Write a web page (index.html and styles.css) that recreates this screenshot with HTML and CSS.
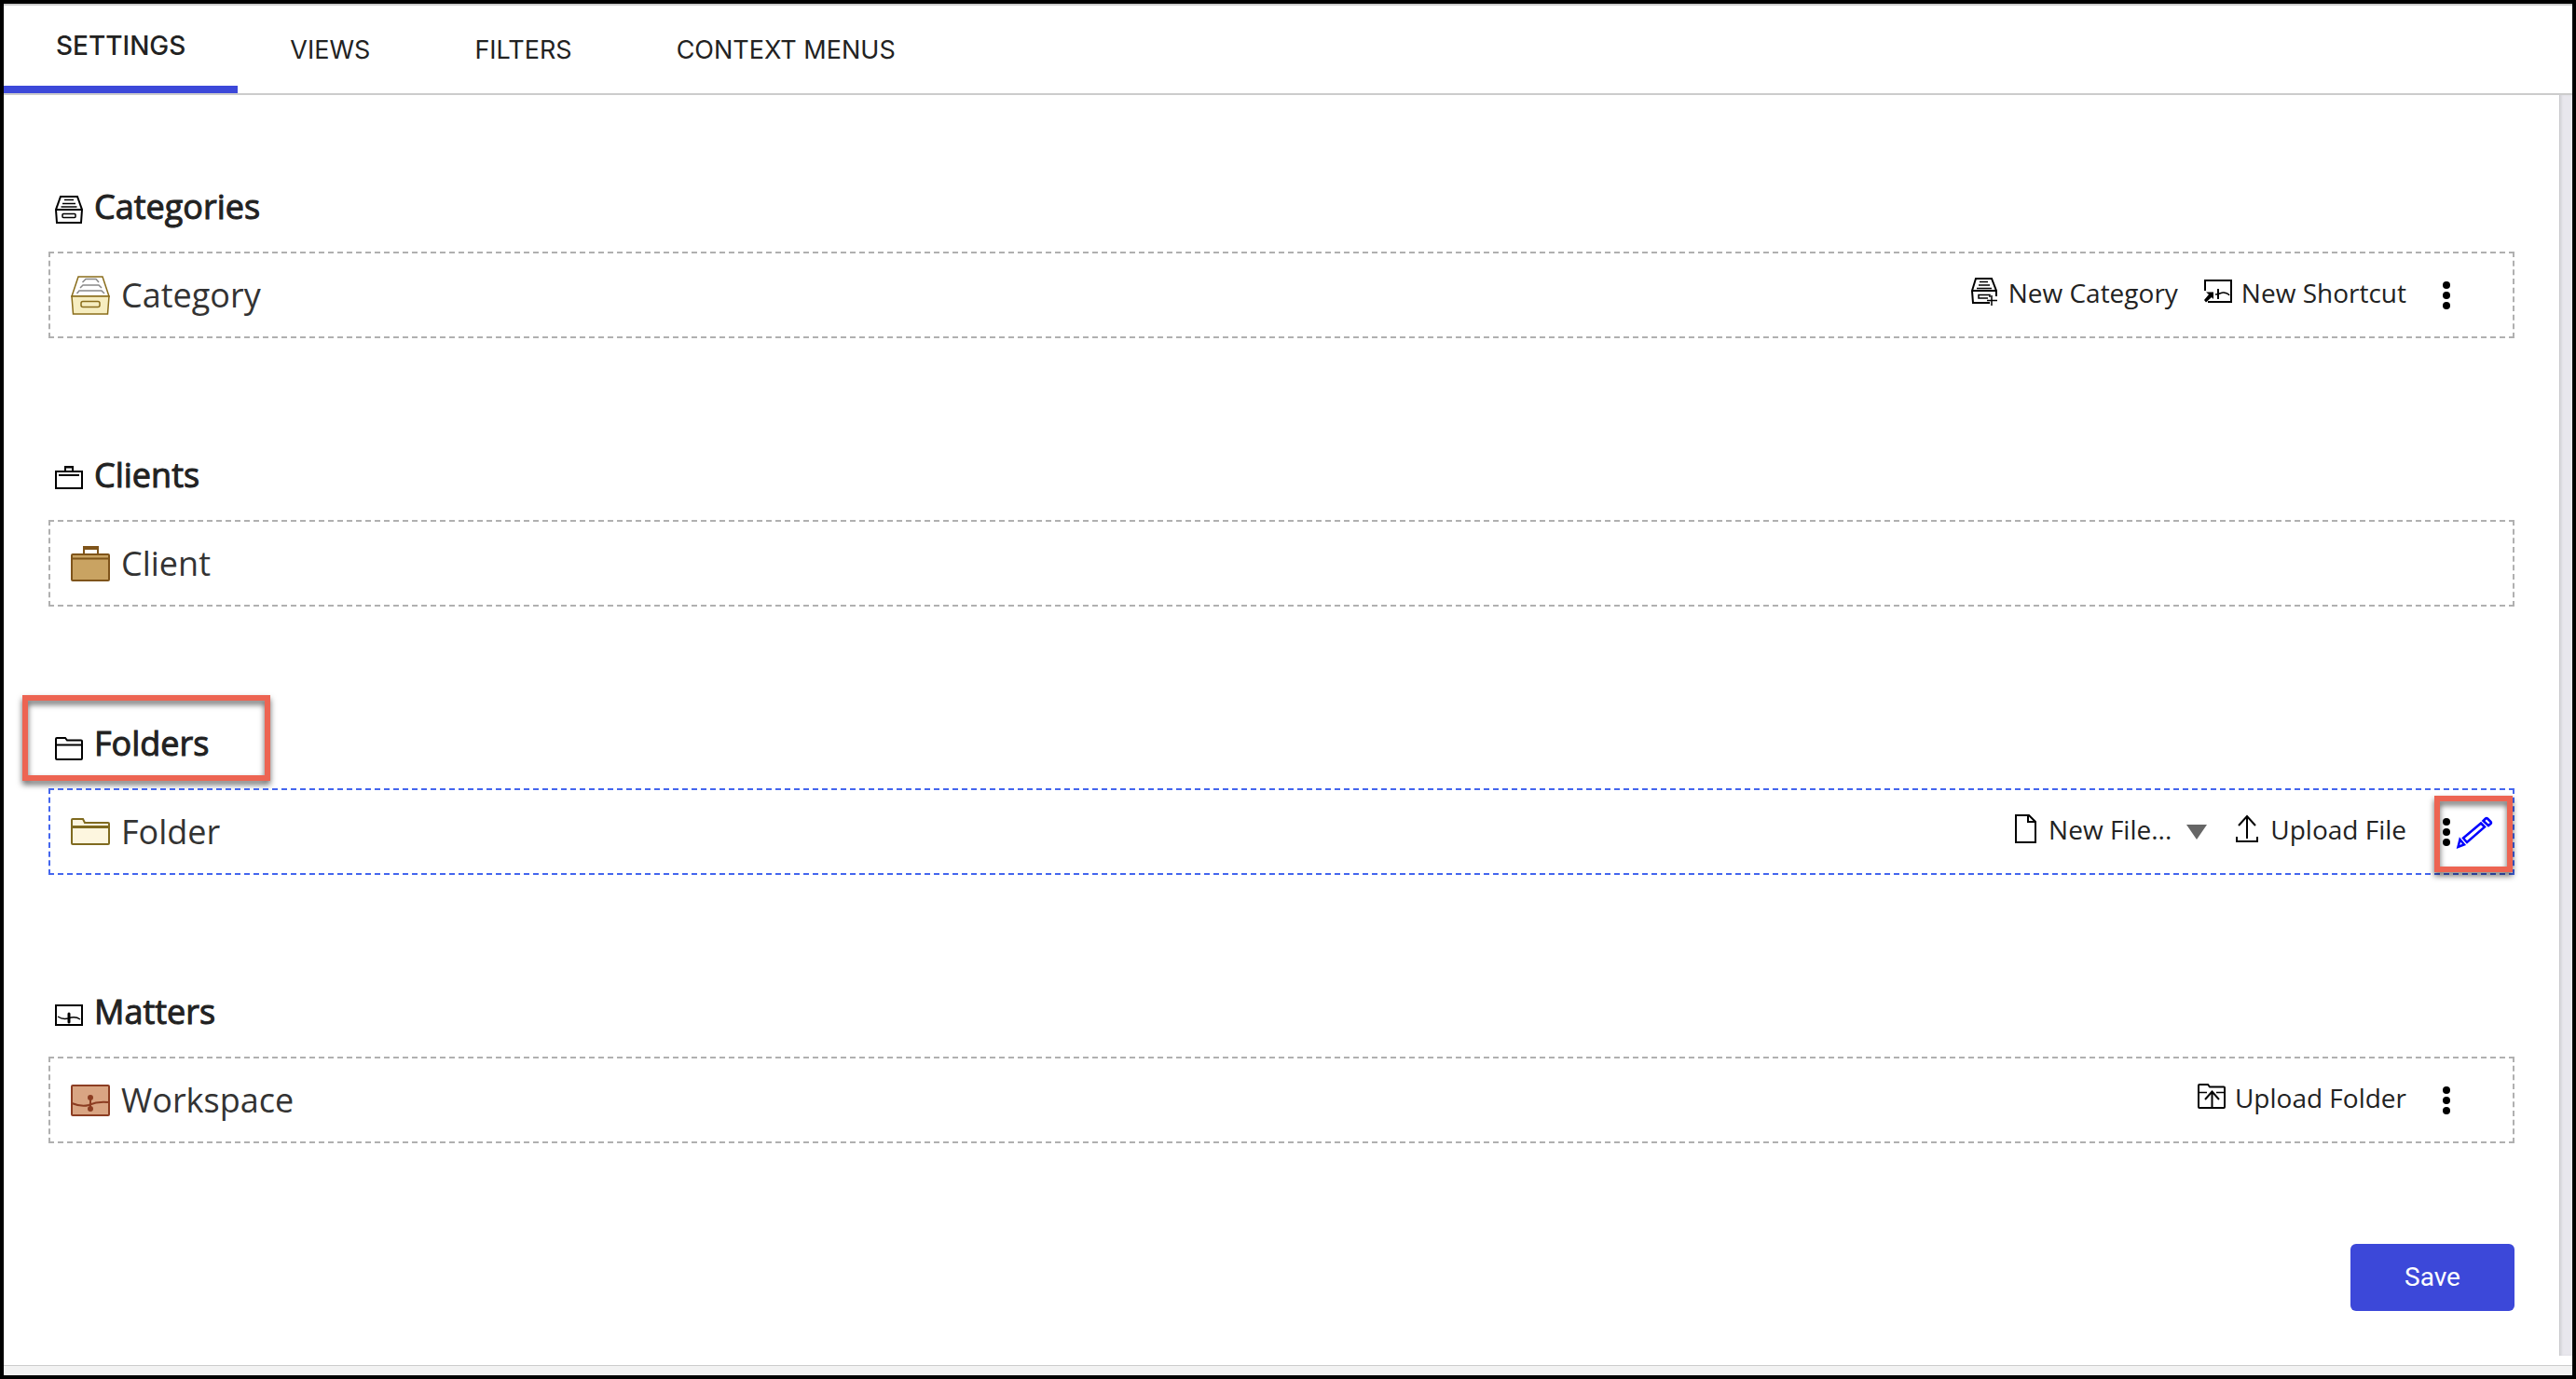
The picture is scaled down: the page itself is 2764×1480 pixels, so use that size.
FILE: index.html
```html
<!DOCTYPE html>
<html lang="en">
<head>
    <meta charset="UTF-8">
    <meta name="viewport" content="width=device-width, initial-scale=1.0">
    <title>Settings</title>
    <link rel="stylesheet" href="styles.css">
</head>
<body>
    <nav class="tabs">
        <a class="tab active" href="#settings">SETTINGS</a>
        <a class="tab" href="#views">VIEWS</a>
        <a class="tab" href="#filters">FILTERS</a>
        <a class="tab" href="#menus">CONTEXT MENUS</a>
    </nav>

    <div class="panel">
        <main class="content">
            <!-- Categories -->
            <section class="group">
                <h2 class="group-title">
                    <svg class="title-icon" viewBox="0 0 30 30">
                        <path d="M6 1H24L29 15L28 29H2L1 15ZM1 15H29"/>
                        <path class="thin" d="M10 4.5H20M8 8.5H22M6.500 12H23.500"/>
                        <rect class="thin" x="8" y="19.500" width="14" height="4" rx="1"/>
                    </svg>
                    Categories
                </h2>
                <div class="card">
                    <svg class="card-icon category" viewBox="0 0 42 42">
                        <path class="paper" d="M8 1H34L41 22H1Z"/>
                        <path class="front" d="M1 22H41L39.500 41H2.500Z"/>
                        <path class="sheets" d="M12.500 7L16 3.500H27L30 7M10 13L13 10H30L33 13M6.500 19L9 16H33L36 19"/>
                        <rect class="front" x="11" y="27.500" width="20" height="6" rx="2"/>
                    </svg>
                    <span class="card-name">Category</span>
                    <div class="actions">
                        <button class="action">
                            <svg class="action-icon" viewBox="0 0 30 30">
                                <path d="M20 27H2L1 14L5 1H22L27 14V20M1 14H27"/>
                                <path class="thin" d="M9 4.500H18M8 8H20M6 11.500H22M20 21V18.500H8V22H18M22 19V30M17 24.500H28"/>
                            </svg>
                            New Category
                        </button>
                        <button class="action">
                            <svg class="action-icon" viewBox="0 0 30 30">
                                <path d="M1 14V3H29V26H4"/>
                                <path class="thin" d="M12 18C17 18 18 15.500 21 16C24 16.500 26 17 27 19"/>
                                <path d="M15 12V23"/>
                                <path class="solid" d="M2 15.500H10V23L8 21L2 26.500L0 24L5 18Z"/>
                            </svg>
                            New Shortcut
                        </button>
                        <button class="more" aria-label="More">
                            <svg viewBox="0 0 22 34"><circle cx="11" cy="6" r="4"/><circle cx="11" cy="17" r="4"/><circle cx="11" cy="28" r="4"/></svg>
                        </button>
                        <div class="edit-slot"></div>
                    </div>
                </div>
            </section>

            <!-- Clients -->
            <section class="group">
                <h2 class="group-title">
                    <svg class="title-icon" viewBox="0 0 30 30">
                        <path d="M1 8H29V26H1ZM11 8V3H19V8"/>
                        <path d="M10 3.500H20M4 12H26"/>
                    </svg>
                    Clients
                </h2>
                <div class="card">
                    <svg class="card-icon client" viewBox="0 0 42 42">
                        <path class="handle" d="M14 11V4Q14 3 15 3H28Q29 3 29 4V11"/>
                        <path class="handle-top" d="M13 4H30"/>
                        <rect x="1" y="11" width="40" height="28" rx="1"/>
                        <path d="M1 15.500H41"/>
                    </svg>
                    <span class="card-name">Client</span>
                </div>
            </section>

            <!-- Folders, the card is hovered -->
            <section class="group">
                <h2 class="group-title">
                    <svg class="title-icon" viewBox="0 0 30 30">
                        <path d="M1 28V7Q1 6 2 6H11L13 8.500H28Q29 8.500 29 9.500V28Q29 29 28 29H2Q1 29 1 28Z"/>
                        <path d="M1 13.500H29"/>
                    </svg>
                    Folders
                    <span class="callout callout-title"></span>
                </h2>
                <div class="card hover">
                    <svg class="card-icon folder" viewBox="0 0 42 42">
                        <path d="M1 33V8Q1 7 2 7H13L15 11H40Q41 11 41 12V33Q41 34 40 34H2Q1 34 1 33Z"/>
                        <path class="edge" d="M1 15.500H41"/>
                    </svg>
                    <span class="card-name">Folder</span>
                    <div class="actions">
                        <button class="action">
                            <svg class="action-icon" viewBox="0 0 30 30">
                                <path d="M5 1H19L26 8V30H5ZM18 1V8H26"/>
                            </svg>
                            New File...
                            <svg class="caret" viewBox="0 0 22 16"><path d="M0 0H22L11 16Z"/></svg>
                        </button>
                        <button class="action">
                            <svg class="action-icon" viewBox="0 0 30 30">
                                <path d="M15 26V3M6 12L15 2L24 12M4 24V29H26V24"/>
                            </svg>
                            Upload File
                        </button>
                        <button class="more" aria-label="More">
                            <svg viewBox="0 0 22 34"><circle cx="11" cy="6" r="4"/><circle cx="11" cy="17" r="4"/><circle cx="11" cy="28" r="4"/></svg>
                        </button>
                        <button class="edit-slot" aria-label="Edit">
                            <svg viewBox="0 0 38 36">
                                <path d="M3.500 26L8 31.500L1.500 34ZM7 24.500L26 8.500L30 12.500L11 29ZM28.500 6L31 3.500Q32 2.500 33 3.500L36.500 7Q37.500 8 36.500 9L34 11Z"/>
                            </svg>
                        </button>
                    </div>
                    <span class="callout callout-edit"></span>
                </div>
            </section>

            <!-- Matters -->
            <section class="group">
                <h2 class="group-title">
                    <svg class="title-icon" viewBox="0 0 30 30">
                        <rect x="1" y="5" width="28" height="21"/>
                        <path class="thin" d="M3 17C6 19 10 20 14 19C18 17.500 23 17 27 20"/>
                        <path class="pin" d="M15 14V23"/>
                    </svg>
                    Matters
                </h2>
                <div class="card">
                    <svg class="card-icon workspace" viewBox="0 0 42 42">
                        <rect x="1" y="5" width="40" height="32" rx="1"/>
                        <path d="M1 24C6 26 13 28 19 26C26 23 31 22 40 23M21 18V30"/>
                        <circle cx="21" cy="18" r="2"/>
                        <circle cx="21" cy="30" r="2"/>
                    </svg>
                    <span class="card-name">Workspace</span>
                    <div class="actions">
                        <button class="action">
                            <svg class="action-icon" viewBox="0 0 30 30">
                                <path d="M1 26V3Q1 2 2 2H11L13 4.500H28Q29 4.500 29 5.500V26Q29 27 28 27H2Q1 27 1 26Z"/>
                                <path class="thin" d="M1 10.500H10M20 10.500H29"/>
                                <path d="M15.500 27V9M8 18L15.500 9.500L23 18"/>
                            </svg>
                            Upload Folder
                        </button>
                        <button class="more" aria-label="More">
                            <svg viewBox="0 0 22 34"><circle cx="11" cy="6" r="4"/><circle cx="11" cy="17" r="4"/><circle cx="11" cy="28" r="4"/></svg>
                        </button>
                        <div class="edit-slot"></div>
                    </div>
                </div>
            </section>

            <div class="footer">
                <button class="save">Save</button>
            </div>
        </main>
        <div class="scroll-track"></div>
    </div>
    <div class="bottom-bar"></div>
</body>
</html>
```
FILE: styles.css
```css
* {
    box-sizing: border-box;
}
body {
    margin: 0;
    min-height: 100vh;
    display: flex;
    flex-direction: column;
    border: 4px solid #000000;
    background-color: #FFFFFF;
    color: #222222;
    font-family: "Open Sans", sans-serif;
}
button {
    margin: 0;
    padding: 0;
    border: none;
    background: none;
    color: inherit;
    font: inherit;
    cursor: pointer;
}
svg {
    display: block;
    flex: none;
    overflow: visible;
    fill: none;
}

/* Tabs */
.tabs {
    display: flex;
    height: 98px;
    border-top: 2px solid #CCCCCC;
    border-bottom: 2px solid #CCCCCC;
}
.tab {
    display: flex;
    align-items: center;
    padding: 0 56px;
    font-family: Inter, sans-serif;
    font-size: 27px;
    color: #222222;
    text-decoration: none;
}
.tab.active {
    border-bottom: 8px solid #3C48D9;
    font-size: 28px;
    font-weight: 500;
}

/* Scrolling panel */
.panel {
    display: flex;
    flex: 1;
}
.content {
    flex: 1;
    padding: 94px 48px 48px;
}
.scroll-track {
    width: 14px;
    background-color: #E8E7ED;
    border-left: 1px solid #C8C8CC;
    box-shadow: inset 2px 0 2px #D8D8DD;
}
.bottom-bar {
    height: 11px;
    margin-top: 10px;
    background-color: #F2F2F2;
    border-top: 1px solid #CCCCCC;
}

/* Groups */
.group {
    margin-bottom: 121px;
}
.group:nth-of-type(4) {
    margin-bottom: 108px;
}
.group-title {
    position: relative;
    display: flex;
    align-items: center;
    gap: 12px;
    width: fit-content;
    margin: 0 0 23px;
    padding: 1px 0 0 7px;
    font-size: 36px;
    line-height: 50px;
    font-weight: 400;
    -webkit-text-stroke: 1px #222222;
}
.title-icon {
    width: 30px;
    height: 30px;
    margin-top: 6px;
    stroke: #000000;
    stroke-width: 2;
}
.thin {
    stroke-width: 1.5;
}
.pin {
    stroke-width: 3;
    stroke-linecap: round;
}
.card {
    position: relative;
    display: flex;
    align-items: center;
    gap: 12px;
    height: 93px;
    padding: 0 22px;
    border: 2px dashed #B0B0B0;
}
.card.hover {
    border-color: #4466EE;
}
.card-name {
    font-size: 36px;
    line-height: 50px;
    color: #333333;
}

/* Coloured card icons */
.card-icon {
    width: 42px;
    height: 42px;
    stroke-width: 2;
}
.category {
    stroke: #8A6D1B;
    stroke-width: 1.5;
}
.category .paper {
    fill: #FFFFFF;
}
.category .front {
    fill: #F6EDC0;
}
.category .sheets {
    stroke: #888888;
}
.client {
    fill: #C9A362;
    stroke: #7F541A;
}
.client .handle {
    fill: none;
}
.client .handle-top {
    stroke-width: 4;
}
.folder {
    fill: #FDF6DF;
    stroke: #7F6A1F;
}
.folder .edge {
    stroke-width: 3;
}
.workspace {
    fill: #D9A583;
    stroke: #8C3D22;
}
.workspace path {
    fill: none;
}
.workspace circle {
    fill: #8C3D22;
}

/* Actions on the right */
.actions {
    display: flex;
    align-items: center;
    gap: 28px;
    margin-left: auto;
}
.action {
    display: flex;
    align-items: center;
    gap: 10px;
    padding-bottom: 6px;
    font-size: 28px;
    line-height: 40px;
}
.action-icon {
    width: 30px;
    height: 30px;
    margin-bottom: 2px;
    stroke: #000000;
    stroke-width: 2;
}
.solid {
    fill: #000000;
    stroke: none;
}
.caret {
    width: 22px;
    height: 16px;
    margin: 6px 0 0 6px;
    fill: #666666;
}
.more {
    width: 22px;
    height: 34px;
    margin-left: 4px;
}
.more svg {
    fill: #000000;
}
.edit-slot {
    width: 38px;
    height: 36px;
    margin-left: -28px;
    stroke: #0000FF;
    stroke-width: 2.5;
}

/* Red markers */
.callout {
    position: absolute;
    border: 6px solid #ED6452;
    filter: drop-shadow(0 4px 3px rgba(0,0,0,0.6));
    pointer-events: none;
}
.callout-title {
    left: -28px;
    top: -26px;
    width: 266px;
    height: 92px;
}
.callout-edit {
    right: 0;
    top: 6px;
    width: 84px;
    height: 82px;
}

/* Save */
.footer {
    display: flex;
    justify-content: flex-end;
}
.save {
    width: 176px;
    height: 72px;
    padding-bottom: 2px;
    border-radius: 6px;
    background-color: #3C48D9;
    color: #FFFFFF;
    font-family: Roboto, sans-serif;
    font-size: 28px;
}
```
